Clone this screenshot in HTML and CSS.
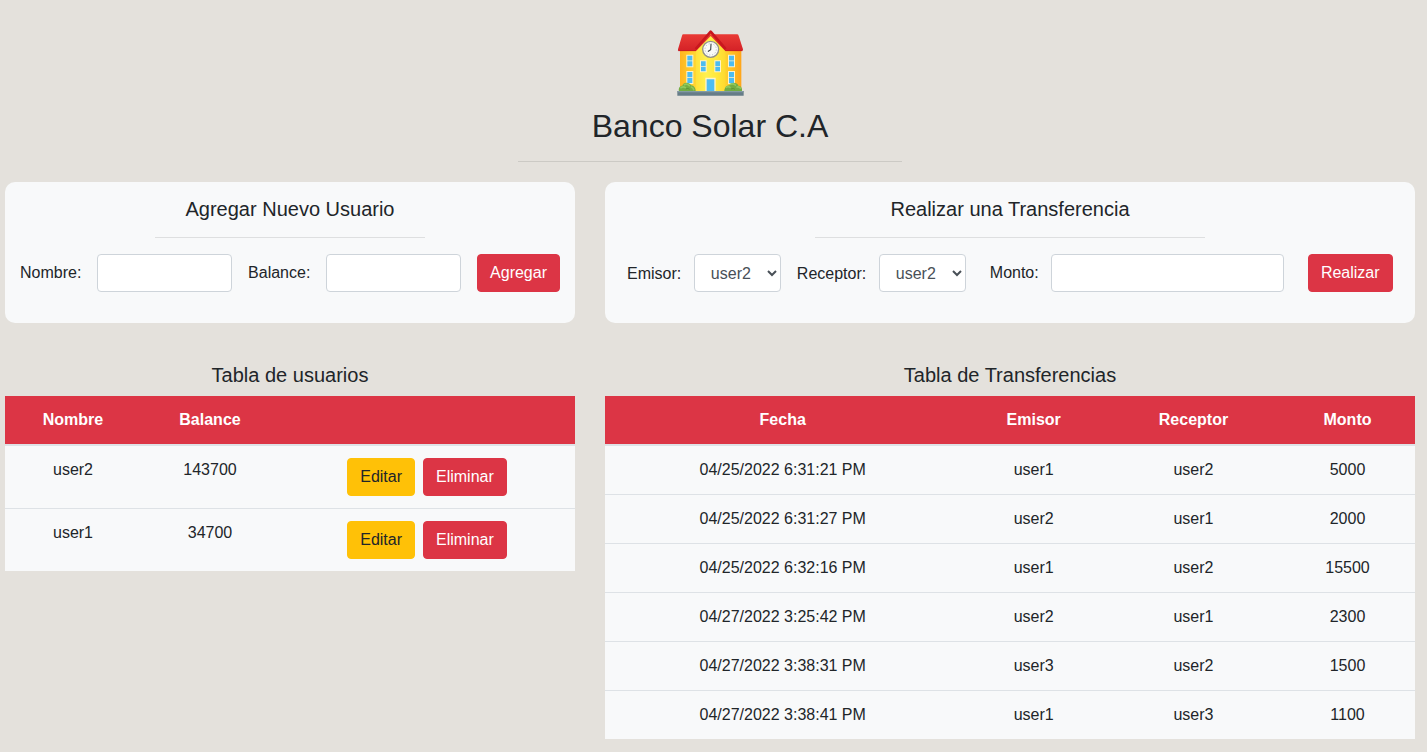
FILE: index.html
```html
<!DOCTYPE html>
<html lang="es">
<head>
<meta charset="utf-8">
<title>Banco Solar C.A</title>
<link rel="stylesheet" href="styles.css">
</head>
<body>
<header class="masthead">
  <svg class="logo" viewBox="0 0 240 240" aria-hidden="true">
    <defs>
      <linearGradient id="wall" x1="0" x2="1"><stop offset="0" stop-color="#ffb520"/><stop offset=".25" stop-color="#ffd632"/><stop offset=".5" stop-color="#ffe43a"/><stop offset=".75" stop-color="#ffd02e"/><stop offset="1" stop-color="#ffa51a"/></linearGradient>
      <linearGradient id="front" x1="0" x2="1"><stop offset="0" stop-color="#ffe23a"/><stop offset=".35" stop-color="#fff04f"/><stop offset=".7" stop-color="#ffe83d"/><stop offset="1" stop-color="#ffd92f"/></linearGradient>
      <linearGradient id="roof" x1="0" x2="0" y1="0" y2="1"><stop offset="0" stop-color="#e93b35"/><stop offset="1" stop-color="#d42127"/></linearGradient>
    </defs>
    <path fill="url(#wall)" d="M30 78h184v132H30z"/>
    <path fill="url(#front)" d="M78 76l44-46 44 46v134H78z"/>
    <path fill="url(#roof)" d="M40 37h161q4 0 5 4l13 41q1 5-4 5h-49l-44-45-44 45H27q-5 0-3-5l12-41q1-4 4-4z"/>
    <path fill="none" stroke="#bd1a20" stroke-width="2" d="M25 86h53m88 0h51"/>
    <path fill="none" stroke="#c9171e" stroke-width="8" stroke-linejoin="round" d="M77 81l45-52 45 52"/>
    <path fill="#fff3cb" d="M49 98h21v38H49zM49 147h21v39H49zM174 98h21v38h-21zM174 147h21v39h-21zM90 115h20v36H90zM133 115h20v36h-20zM106 167h31v40h-31z"/>
    <path fill="#4dbcf2" d="M52 101h15v14.5H52zM52 118h15v15H52zM52 150h15v15H52zM52 167.500h15v15.500H52zM177 101h15v14.500h-15zM177 118h15v15h-15zM177 150h15v15h-15zM177 167.500h15v15.500h-15zM93 118h14v14H93zM93 134.500h14v13.500H93zM136 118h14v14h-14zM136 134.500h14v13.500h-14zM110 172h23v35h-23z"/>
    <circle cx="122" cy="82" r="24" fill="#fafaf7" stroke="#92908a" stroke-width="4"/>
    <path fill="none" stroke="#b5b9bb" stroke-width="3" stroke-dasharray="3 5.900" d="M122 65a17 17 0 1 1 0 34a17 17 0 1 1 0-34"/>
    <path fill="none" stroke="#40474b" stroke-width="3.400" stroke-linecap="round" d="M123 67l-1 16-7 5"/>
    <path fill="#73ad43" d="M27 208c-3-10 3-17 10-17 2-11 22-12 26-1 9 0 15 10 14 18zM163 208c0-10 7-19 16-18 5-11 23-9 26 1 8 0 13 9 11 17z"/>
    <path fill="none" stroke="#91c95d" stroke-width="5" stroke-linecap="round" d="M33 197q7-5 13 0m-3-9q8-4 15 3m6 4q6 2 7 8m98-7q5-4 11 0m1-9q10-4 15 2m5 6q6-2 10 3"/>
    <path fill="none" stroke="#558f34" stroke-width="2.500" d="M47 201q7-4 12 1m124-1q7-4 12 1"/>
    <path fill="#667c88" d="M22 207h199v14H22z"/>
    <path fill="#839ba4" d="M22 207h199v4H22z"/>
  </svg>
  <h1 class="brand">Banco Solar C.A</h1>
  <hr class="rule brand-rule">
</header>
<main class="columns">
  <section>
    <div class="card">
      <h2 class="title">Agregar Nuevo Usuario</h2>
      <hr class="rule card-rule">
      <form class="form user-form">
        <label>Nombre:</label><input class="control" type="text">
        <label>Balance:</label><input class="control" type="text">
        <button class="btn danger" type="button">Agregar</button>
      </form>
    </div>
    <h2 class="title table-title">Tabla de usuarios</h2>
    <table class="table users">
      <colgroup><col class="u-name"><col class="u-balance"><col></colgroup>
      <thead><tr><th>Nombre</th><th>Balance</th><th></th></tr></thead>
      <tbody>
        <tr><td>user2</td><td>143700</td><td><div class="actions"><button class="btn warning">Editar</button><button class="btn danger">Eliminar</button></div></td></tr>
        <tr><td>user1</td><td>34700</td><td><div class="actions"><button class="btn warning">Editar</button><button class="btn danger">Eliminar</button></div></td></tr>
      </tbody>
    </table>
  </section>
  <section>
    <div class="card">
      <h2 class="title">Realizar una Transferencia</h2>
      <hr class="rule card-rule">
      <form class="form transfer-form">
        <label class="low">Emisor:</label>
        <select class="control select"><option>user2</option></select>
        <label class="low receptor">Receptor:</label>
        <select class="control select"><option>user2</option></select>
        <label class="amount">Monto:</label><input class="control" type="text">
        <button class="btn danger send" type="button">Realizar</button>
      </form>
    </div>
    <h2 class="title table-title">Tabla de Transferencias</h2>
    <table class="table">
      <colgroup><col class="t-date"><col class="t-from"><col class="t-to"><col></colgroup>
      <thead><tr><th>Fecha</th><th>Emisor</th><th>Receptor</th><th>Monto</th></tr></thead>
      <tbody>
        <tr><td>04/25/2022 6:31:21 PM</td><td>user1</td><td>user2</td><td>5000</td></tr>
        <tr><td>04/25/2022 6:31:27 PM</td><td>user2</td><td>user1</td><td>2000</td></tr>
        <tr><td>04/25/2022 6:32:16 PM</td><td>user1</td><td>user2</td><td>15500</td></tr>
        <tr><td>04/27/2022 3:25:42 PM</td><td>user2</td><td>user1</td><td>2300</td></tr>
        <tr><td>04/27/2022 3:38:31 PM</td><td>user3</td><td>user2</td><td>1500</td></tr>
        <tr><td>04/27/2022 3:38:41 PM</td><td>user1</td><td>user3</td><td>1100</td></tr>
      </tbody>
    </table>
  </section>
</main>
</body>
</html>
```
FILE: styles.css
```css
*, *::before, *::after { box-sizing: border-box; }

body {
  margin: 0;
  padding: 0 12px 0 5px;
  background: #e4e1dc;
  color: #212529;
  font: 400 16px/24px "Liberation Sans", Arial, sans-serif;
}

.masthead {
  display: flex;
  flex-direction: column;
  align-items: center;
  height: 182px;
  padding-top: 22px;
}

.logo { display: block; width: 80px; height: 80px; }

.brand {
  margin: 5px 0 0;
  font-size: 32px;
  font-weight: 400;
  line-height: 38px;
}

.rule { border: 0; border-top: 1px solid rgba(0, 0, 0, .1); }
.brand-rule { width: 384px; margin: 16px 0 0; }

.columns {
  display: grid;
  grid-template-columns: 570px 810px;
  gap: 30px;
  align-items: start;
}

.card {
  height: 141px;
  padding: 15px;
  border-radius: 10px;
  background: #f8f9fa;
}

.title {
  margin: 0;
  font-size: 20px;
  font-weight: 400;
  line-height: 24px;
  text-align: center;
}

.card-rule { width: 50%; margin: 16px auto; }

.form { display: flex; align-items: center; }
.user-form { justify-content: space-between; }
.transfer-form { padding: 0 7px; }

.control {
  width: 135px;
  height: 38px;
  padding: 6px 12px;
  border: 1px solid #ced4da;
  border-radius: 4px;
  background: #fff;
  color: #495057;
  font: inherit;
}

.select { width: 87px; margin-left: 12.6px; }
.low { padding-top: 2px; }
.receptor { margin-left: 16px; }
.amount { margin-left: 24px; }
.amount + .control { width: 233px; margin: 0 24px 0 12px; }

.btn {
  height: 38px;
  padding: 6px 12px;
  border: 1px solid transparent;
  border-radius: 4px;
  font: inherit;
}

.send { width: 85px; padding-inline: 0; }

.danger { background: #dc3545; border-color: #dc3545; color: #fff; }
.warning { background: #ffc107; border-color: #ffc107; color: #212529; }

.table-title { margin: 40px 0 9px; }

.table {
  width: 100%;
  table-layout: fixed;
  border-collapse: separate;
  border-spacing: 0;
  background: #f8f9fa;
  text-align: center;
}

.table th {
  height: 50px;
  padding: 12px;
  border-bottom: 2px solid #dee2e6;
  background: #dc3545;
  background-clip: padding-box;
  color: #fff;
}

.table td { padding: 12px; vertical-align: top; }
.table tr + tr td { border-top: 1px solid #dee2e6; }

.u-name { width: 136px; }
.u-balance { width: 138px; }
.t-date { width: 355.4px; }
.t-from { width: 146.6px; }
.t-to { width: 173px; }

.actions { display: flex; justify-content: center; gap: 8px; }
```
